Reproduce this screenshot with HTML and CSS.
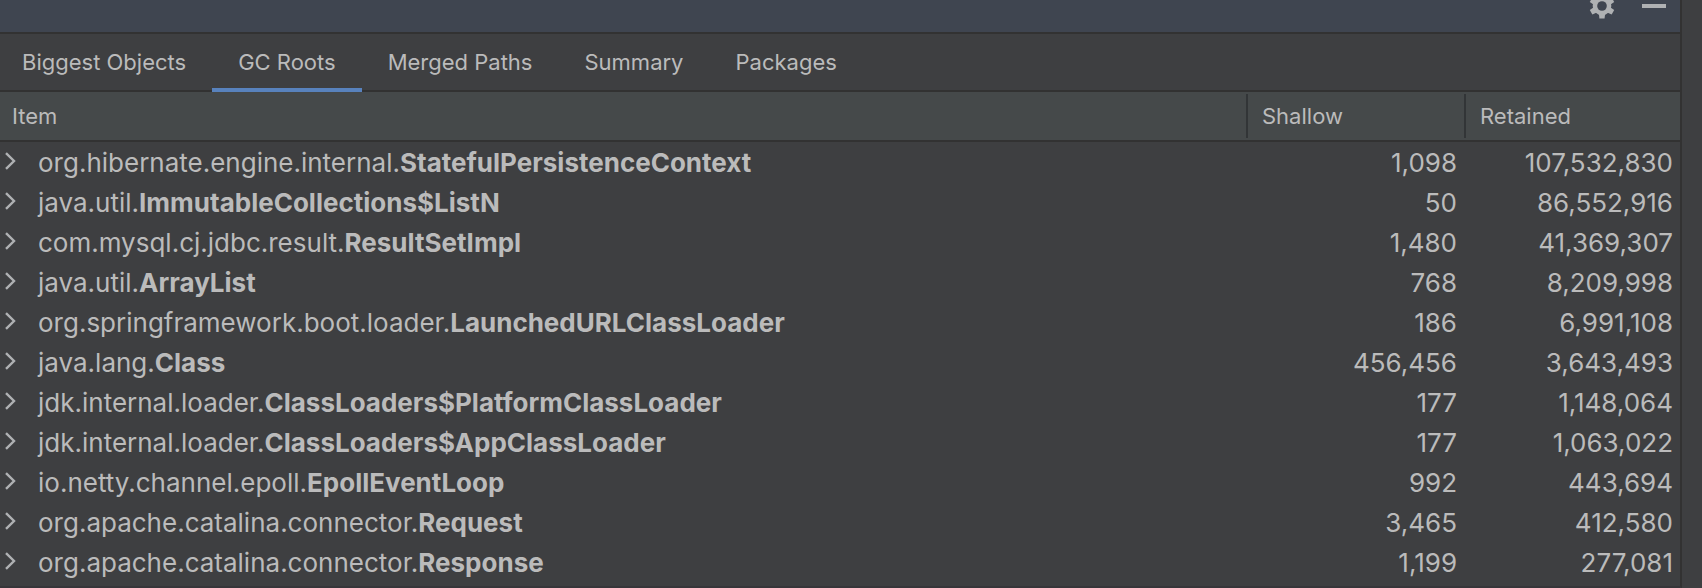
FILE: index.html
```html
<!DOCTYPE html>
<html lang="en">
<head>
    <meta charset="UTF-8">
    <meta name="viewport" content="width=device-width, initial-scale=1.0">
    <title>GC Roots</title>
    <link rel="stylesheet" href="styles.css">
</head>
<body>
    <main class="panel">
        <header class="titlebar">
            <button type="button" class="icon-button" aria-label="Settings">
                <svg viewBox="0 0 26 26" width="26" height="26">
                    <g fill="#afb1b3">
                        <path id="tooth" d="M10 4 L10.4 0.4 H15.6 L16 4 V22 L15.6 25.6 H10.4 L10 22 Z"/>
                        <use href="#tooth" transform="rotate(60 13 13)"/>
                        <use href="#tooth" transform="rotate(120 13 13)"/>
                        <circle cx="13" cy="13" r="9.3"/>
                    </g>
                    <circle cx="13" cy="13" r="4.8" fill="#3f4550"/>
                </svg>
            </button>
            <button type="button" class="icon-button" aria-label="Hide">
                <svg viewBox="0 0 26 26" width="26" height="26">
                    <rect x="1" y="11" width="24" height="4" fill="#afb1b3"/>
                </svg>
            </button>
        </header>

        <nav class="tabs">
            <button type="button" class="tab">Biggest Objects</button>
            <button type="button" class="tab active">GC Roots</button>
            <button type="button" class="tab">Merged Paths</button>
            <button type="button" class="tab">Summary</button>
            <button type="button" class="tab">Packages</button>
        </nav>

        <table class="roots">
            <thead>
                <tr>
                    <th class="col-item">Item</th>
                    <th class="col-size col-shallow">Shallow</th>
                    <th class="col-size col-retained">Retained</th>
                </tr>
            </thead>
            <tbody id="rootList"></tbody>
        </table>
    </main>

    <script>
        const roots = [
            ['org.hibernate.engine.internal.', 'StatefulPersistenceContext', 1098, 107532830],
            ['java.util.', 'ImmutableCollections$ListN', 50, 86552916],
            ['com.mysql.cj.jdbc.result.', 'ResultSetImpl', 1480, 41369307],
            ['java.util.', 'ArrayList', 768, 8209998],
            ['org.springframework.boot.loader.', 'LaunchedURLClassLoader', 186, 6991108],
            ['java.lang.', 'Class', 456456, 3643493],
            ['jdk.internal.loader.', 'ClassLoaders$PlatformClassLoader', 177, 1148064],
            ['jdk.internal.loader.', 'ClassLoaders$AppClassLoader', 177, 1063022],
            ['io.netty.channel.epoll.', 'EpollEventLoop', 992, 443694],
            ['org.apache.catalina.connector.', 'Request', 3465, 412580],
            ['org.apache.catalina.connector.', 'Response', 1199, 277081]
        ];

        const rootList = document.getElementById('rootList');

        roots.forEach(([pkg, name, shallow, retained]) => {
            const row = document.createElement('tr');
            row.innerHTML = `
                <td>
                    <div class="item">
                        <button type="button" class="expand" aria-label="Expand ${name}">
                            <svg viewBox="0 0 12 18" width="12" height="18">
                                <path d="M2 1.2 L10 9 L2 16.8" fill="none" stroke="#afb1b3" stroke-width="2.4"/>
                            </svg>
                        </button>
                        <span>${pkg}<strong>${name}</strong></span>
                    </div>
                </td>
                <td class="size">${shallow.toLocaleString('en-US')}</td>
                <td class="size">${retained.toLocaleString('en-US')}</td>
            `;
            rootList.appendChild(row);
        });
    </script>
</body>
</html>
```
FILE: styles.css
```css
body {
    font-family: Inter, 'Liberation Sans', sans-serif;
    margin: 0;
    background-color: #3e3f41;
    color: #bbbbbb;
}

button {
    font: inherit;
    color: inherit;
    background: none;
    border: none;
    padding: 0;
    cursor: pointer;
}

svg {
    display: block;
}

.panel {
    box-sizing: border-box;
    min-height: 100vh;
    margin-right: 20px;
    border-right: 2px solid #323232;
    border-bottom: 2px solid #37363a;
}

.titlebar {
    display: flex;
    justify-content: flex-end;
    align-items: flex-end;
    gap: 26px;
    box-sizing: border-box;
    height: 34px;
    padding: 0 13px 13px 0;
    overflow: hidden;
    background-color: #3f4550;
    border-bottom: 2px solid #323232;
}

.tabs {
    display: flex;
    height: 56px;
    border-bottom: 2px solid #323232;
}

.tab {
    box-sizing: border-box;
    height: 58px;
    padding: 2px 26px 0;
    font-size: 22px;
    border-bottom: 4px solid transparent;
}

.tab:first-child {
    padding-left: 22px;
}

.tab.active {
    border-bottom-color: #5882bd;
}

.roots {
    width: 100%;
    border-spacing: 0;
    table-layout: fixed;
    font-size: 26px;
    line-height: 38px;
}

.roots th {
    height: 48px;
    padding: 0 16px;
    font-size: 22px;
    font-weight: normal;
    text-align: left;
    background-color: #45494a;
    border-bottom: 2px solid #323232;
}

.roots .col-item {
    padding-left: 12px;
}

/* column divider, 2px short of the header edges */
.roots .col-size {
    background-image: linear-gradient(#323537, #323537);
    background-repeat: no-repeat;
    background-position: 0 2px;
    background-size: 2px 44px;
}

.roots .col-shallow {
    width: 186px;
}

.roots .col-retained {
    width: 184px;
}

.roots td {
    height: 38px;
    padding: 2px 0 0;
}

.roots .size {
    padding-right: 7px;
    text-align: right;
}

.item {
    display: flex;
    align-items: flex-start;
    gap: 22px;
    padding-left: 4px;
    white-space: nowrap;
}

.expand {
    padding-top: 8px;
}
```
